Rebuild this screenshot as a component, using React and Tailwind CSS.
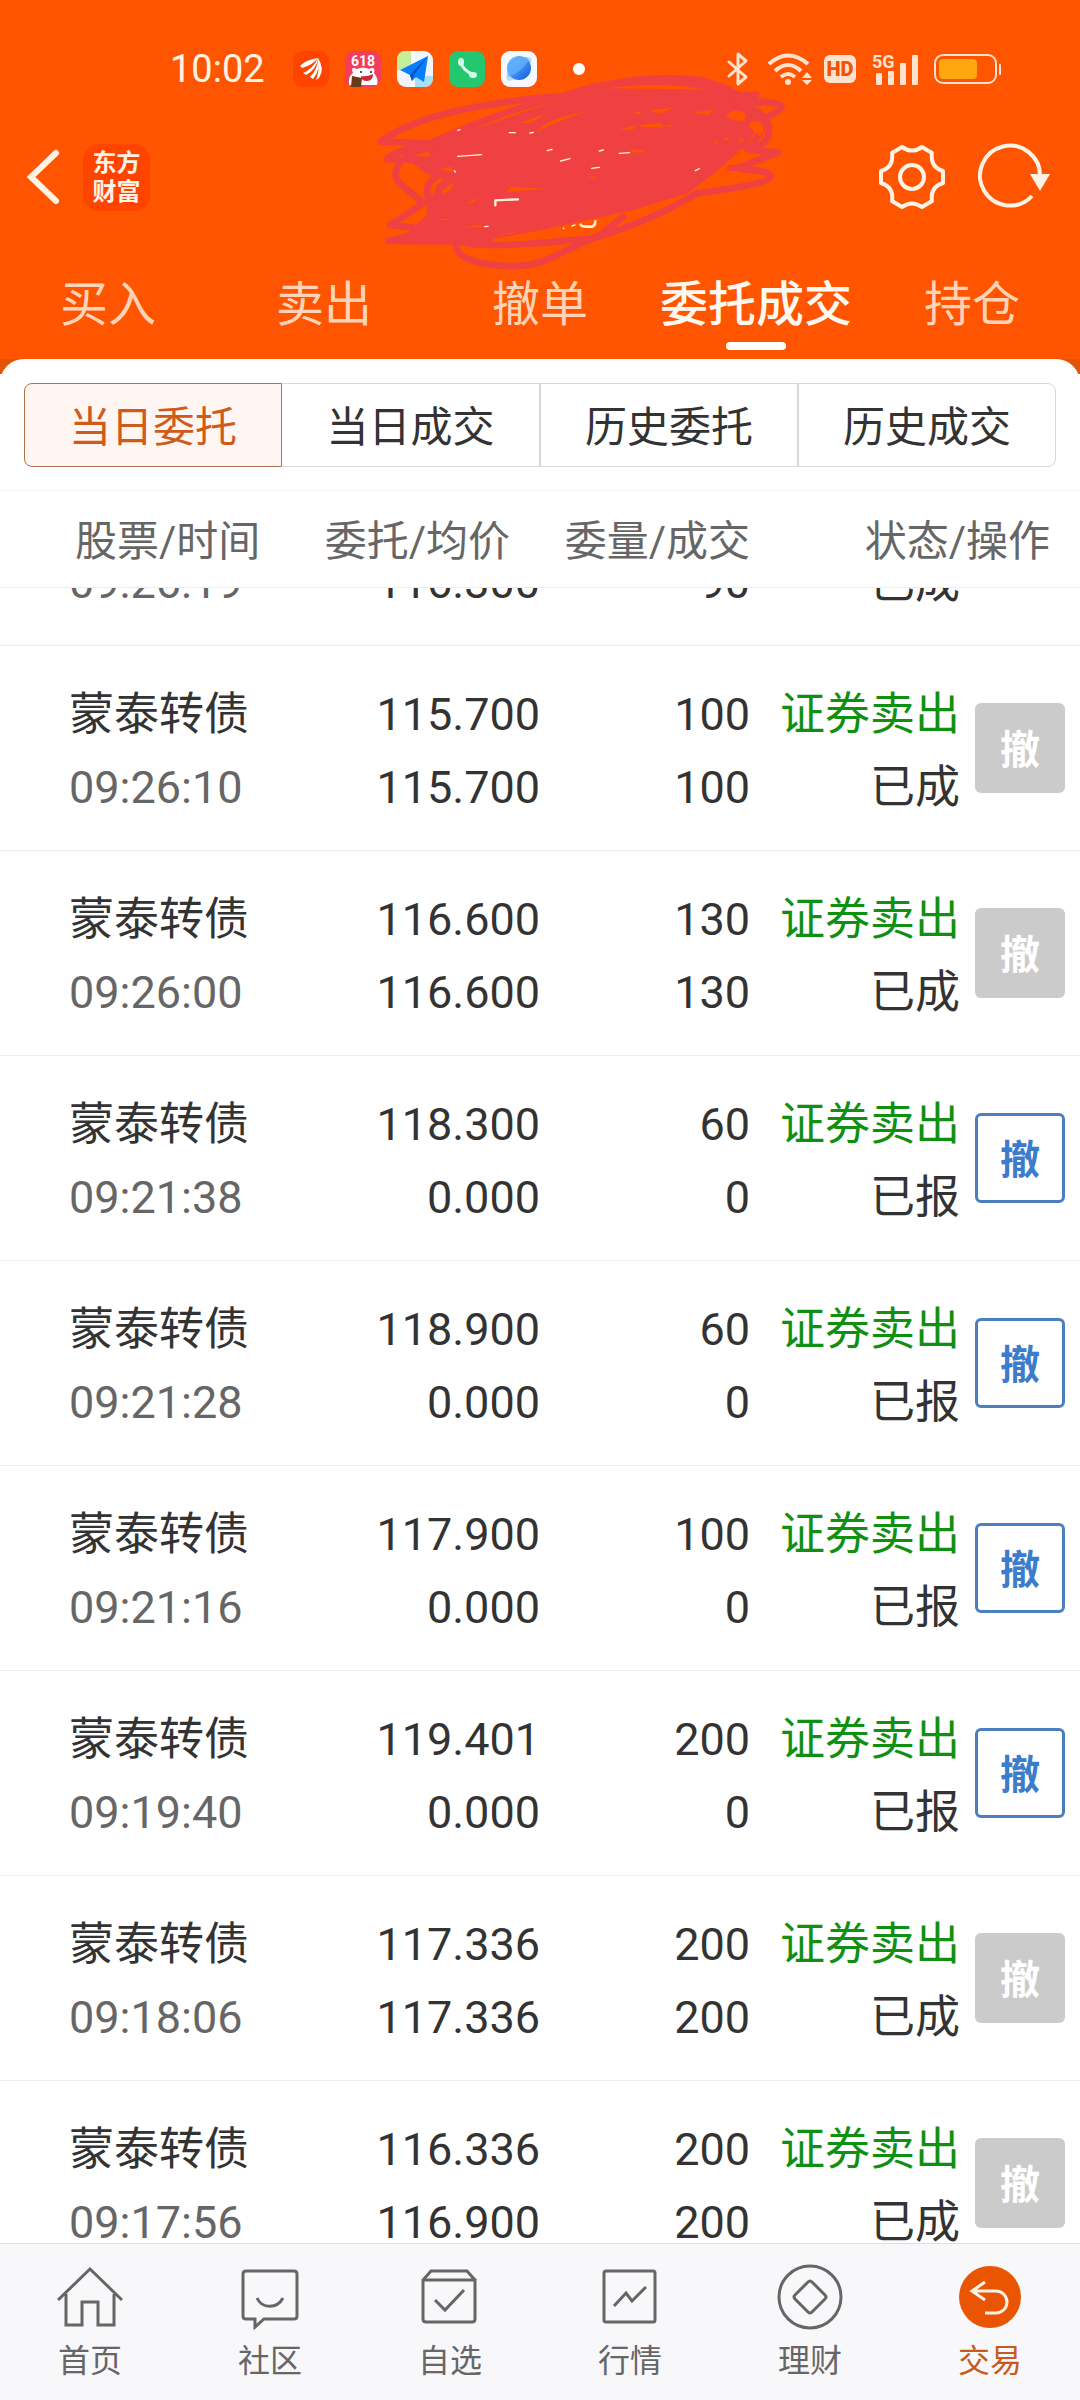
import React, { useLayoutEffect, useRef, useState } from 'react';

const topTabs = ['买入', '卖出', '撤单', '委托成交', '持仓'];
const segments = ['当日委托', '当日成交', '历史委托', '历史成交'];

const orders = [
  { time: '09:26:19', price: '116.300', avg: '116.300', qty: 90, done: 90, status: '已成' },
  { time: '09:26:10', price: '115.700', avg: '115.700', qty: 100, done: 100, status: '已成' },
  { time: '09:26:00', price: '116.600', avg: '116.600', qty: 130, done: 130, status: '已成' },
  { time: '09:21:38', price: '118.300', avg: '0.000', qty: 60, done: 0, status: '已报' },
  { time: '09:21:28', price: '118.900', avg: '0.000', qty: 60, done: 0, status: '已报' },
  { time: '09:21:16', price: '117.900', avg: '0.000', qty: 100, done: 0, status: '已报' },
  { time: '09:19:40', price: '119.401', avg: '0.000', qty: 200, done: 0, status: '已报' },
  { time: '09:18:06', price: '117.336', avg: '117.336', qty: 200, done: 200, status: '已成' },
  { time: '09:17:56', price: '116.336', avg: '116.900', qty: 200, done: 200, status: '已成' },
];

const navItems = [
  {
    label: '首页',
    icon: <path d="M4 39 36 8l32 31M12 33v31h16V41h16v23h16V33" />,
  },
  {
    label: '社区',
    icon: (
      <>
        <path d="M12 10h48q3 0 3 3v42q0 3-3 3H30l-9 8v-8h-9q-3 0-3-3V13q0-3 3-3Z" />
        <path d="M23 37c5 11 20 11 26 0" />
      </>
    ),
  },
  {
    label: '自选',
    icon: (
      <>
        <path d="M9 19h52v39q0 3-3 3H12q-3 0-3-3V19l8-9h36l8 9" />
        <path d="m21 39 10 10 19-20" />
      </>
    ),
  },
  {
    label: '行情',
    icon: (
      <>
        <rect x="10" y="10" width="51" height="51" rx="2" />
        <path d="m20 45 12-13 6 8 14-14" />
      </>
    ),
  },
  {
    label: '理财',
    icon: (
      <>
        <circle cx="36" cy="36" r="31" />
        <path d="m34 21q2-2 4 0l13 13q2 2 0 4L38 51q-2 2-4 0L21 38q-2-2 0-4Z" />
      </>
    ),
  },
  {
    label: '交易',
    active: true,
    icon: (
      <>
        <circle cx="36" cy="36" r="31" fill="#ea5504" stroke="none" />
        <path d="M31 21 18 30l13 9M18 30h24a11 11 0 0 1 0 22H31" stroke="#fff3e6" />
      </>
    ),
  },
];

function StatusBar() {
  return (
    <div className="flex h-[138px] items-center justify-between pl-[170px] pr-[78px]">
      <div className="flex items-center gap-4">
        <span className="w-[107px] text-[38px] leading-none text-[#fff3e6]">10:02</span>

        <svg className="size-9" viewBox="0 0 36 36">
          <rect width="36" height="36" rx="9" fill="#ff4400" />
          <path
            d="M7 15Q12 9 25 7Q20 14 9 17ZM10 22Q20 18 25 7Q24 18 13 24ZM17 26Q25 18 25 7Q28 18 20 28ZM23 29Q27 19 25 7Q32 18 26 27Z"
            fill="#fff"
          />
        </svg>

        <svg className="size-9" viewBox="0 0 36 36">
          <rect width="36" height="36" rx="9" fill="#f23d5c" />
          <path d="M4 34q-1-9 4-12-3-7 4-4 6-3 12 0 7-3 5 4 5 6 3 12Z" fill="#fff" />
          <text x="18" y="15" textAnchor="middle" fontSize="14" fontWeight="700" fill="#fff" fontFamily="Roboto">
            618
          </text>
          <circle cx="16" cy="21" r="1" fill="#222" />
          <circle cx="26" cy="21" r="1" fill="#222" />
          <path d="M16 25q6 1 12-2 0 7-6 7t-6-5Z" fill="#c92a3a" />
          <path d="M7 25l10 2-1 9H6Z" fill="#6b3a1a" />
        </svg>

        <svg className="size-9" viewBox="0 0 36 36">
          <rect width="36" height="36" rx="9" fill="#eef6fc" />
          <path d="M9 0h6v13L0 20V9q0-9 9-9Z" fill="#c4ef9a" />
          <path d="M18 25h18v2q0 9-9 9h-9Z" fill="#a5dff8" />
          <path d="M14 0h4v36h-4Z" fill="#fff" />
          <path d="M31 5 3 19l10 5 2 6 4-4 8 5Z" fill="#0a7dff" />
          <path d="M31 5 13 24l2 6 2-6Z" fill="#0754c9" />
        </svg>

        <svg className="size-9" viewBox="0 0 36 36">
          <rect width="36" height="36" rx="9" fill="#22c76f" />
          <path d="M12 11q1 8 13 13" fill="none" stroke="#d7fbe6" strokeWidth="3" />
          <ellipse cx="12" cy="11" rx="3" ry="4" fill="#d7fbe6" />
          <ellipse cx="24" cy="24" rx="4" ry="3" fill="#d7fbe6" />
        </svg>

        <svg className="size-9" viewBox="0 0 36 36">
          <defs>
            <linearGradient id="planet" x1="0" y1="0" x2="1" y2="1">
              <stop offset="0" stopColor="#7cc4ff" />
              <stop offset="1" stopColor="#0a5be0" />
            </linearGradient>
          </defs>
          <rect width="36" height="36" rx="9" fill="#f5f8fc" />
          <ellipse cx="18" cy="18" rx="16" ry="6" transform="rotate(-42 18 18)" fill="#b9dcfb" />
          <circle cx="18" cy="17" r="12" fill="url(#planet)" />
          <path d="M7 26Q20 22 28 9q-1-3-4-3Q9 8 6 21Z" fill="#62b3fc" opacity=".7" />
        </svg>

        <span className="ml-5 size-3 rounded-full bg-white" />
      </div>

      <div className="flex items-center text-[#ffe3cf]">
        <svg className="h-9 w-6" viewBox="0 0 24 36" fill="none" stroke="currentColor" strokeWidth="3" strokeLinejoin="round" strokeLinecap="round">
          <path d="M3 11 20 26l-8 7V3l8 7L3 25" />
        </svg>
        <svg className="ml-4 h-9 w-12" viewBox="0 0 48 36">
          <g fill="none" stroke="currentColor" strokeWidth="4">
            <path d="M3 13q19-17 39 0" />
            <path d="M9 20q13-12 26 0" />
            <path d="M15 26q7-6 14 0" />
          </g>
          <circle cx="22" cy="31" r="3" fill="currentColor" />
          <path d="m41 21 5 6H36ZM41 34l5-5H36Z" fill="currentColor" />
        </svg>
        <span className="ml-2.5 flex h-7 w-8 items-center justify-center rounded-md bg-[#ffe3cf] text-[20px] font-black leading-none text-[#f25400]">
          HD
        </span>
        <svg className="ml-4 h-9 w-12" viewBox="0 0 48 36" fill="currentColor">
          <text x="0" y="17" fontSize="18" fontWeight="700" fontFamily="Roboto">5G</text>
          <rect x="4" y="22" width="6" height="12" rx="1" />
          <rect x="16" y="20" width="6" height="14" rx="1" />
          <rect x="28" y="12" width="6" height="22" rx="1" />
          <rect x="40" y="4" width="6" height="30" rx="1" />
        </svg>
        <svg className="ml-3.5 h-9 w-[68px]" viewBox="0 0 68 36">
          <rect x="1" y="4" width="61" height="28" rx="8" fill="none" stroke="currentColor" strokeWidth="2" />
          <rect x="5" y="8" width="38" height="20" rx="4" fill="#ffa70f" />
          <rect x="65" y="13" width="2" height="11" rx="1" fill="currentColor" />
        </svg>
      </div>
    </div>
  );
}

// Garabato rojo que tapa el nombre de la cuenta
function AccountScribble() {
  return (
    <svg
      className="pointer-events-none absolute left-1/3 top-[70px] h-[210px] w-[440px]"
      viewBox="0 0 1320 630"
      fill="none"
      stroke="#ef4141"
      strokeWidth="20"
      strokeLinecap="round"
      strokeLinejoin="round"
    >
      <path
        d="M130 245 240 215 370 175 520 110 640 70 760 65 1100 70 1170 110 1190 160 1150 220 1060 300 980 360 820 410 520 475 300 515 200 500 140 505 210 440 210 390 290 330 200 300Z"
        fill="#ef4141"
      />
      <path d="M62 215Q150 150 330 115T620 80L860 90 1188 74" />
      <path d="M62 215 210 220Q400 130 620 75 820 10 1020 30 1080 45 1130 72" />
      <path d="M700 50Q900 20 1040 50L1200 100" />
      <path d="M1120 90Q1270 95 1265 110T1190 155" />
      <path d="M1130 100Q1215 120 1225 170T1170 240L1255 247 1130 295" />
      <path d="M1180 135Q1240 170 1160 235" />
      <path d="M1110 295Q1240 300 1230 322T1010 370" />
      <path d="M82 267Q130 225 230 235M82 267 180 270" />
      <path d="M120 275Q90 320 130 350T190 400L90 465 230 480 85 513 390 515" />
      <path d="M230 320Q190 340 205 390M280 330Q220 350 240 370" />
      <path d="M290 520Q280 570 400 585T600 550L720 495 790 440" />
      <path d="M310 515Q340 540 700 505 880 450 1010 370" />
      <g fill="#ff5500" stroke="none">
        <path d="M345 178Q440 130 605 90 500 120 345 178ZM530 185Q570 140 680 125 600 150 530 185ZM480 160 570 125 510 160ZM815 130 845 123 840 132ZM865 122 945 112 900 130ZM775 180 825 166 822 178ZM840 165 900 160 912 170 845 172ZM910 167 945 165 930 172ZM1000 127 1060 120 1045 135Z" />
        <path d="M1052 224 1075 210 1072 220ZM1088 208 1106 200 1100 212ZM1136 210 1155 205 1140 220ZM155 257 205 245 210 260ZM235 297 275 290 278 305ZM245 362 285 335 270 362 250 372ZM440 365 455 350 560 356ZM670 323 705 318 700 325ZM320 405 348 382 345 395ZM308 474 350 465 375 470ZM398 497 465 485 460 490ZM230 450 260 445 265 450ZM810 250 815 238 862 243ZM840 400 895 388 850 398ZM1050 345 1090 300 1150 305ZM1060 352 1145 325 1120 340Z" />
        <path d="M1098 140Q1115 115 1150 125 1165 140 1150 152 1130 155 1098 140ZM1168 170Q1170 140 1205 160 1218 180 1200 198Z" />
      </g>
      <g stroke="#fff1dc" strokeWidth="4">
        <path d="M293 259 365 254M448 188 466 188M510 189 520 187M562 242 576 238M602 273 630 266M718 243 730 240M778 250 808 248M695 295 718 292M1006 302 1018 296M283 302 286 306M293 181 300 179M374 470 384 469" />
        <path d="M406 406V391L474 388" strokeWidth="7" />
        <path d="M662 464Q664 470 680 470H696Q706 468 706 454" strokeWidth="8" />
        <path d="M610 474 612 476M636 468 645 465" />
      </g>
    </svg>
  );
}

function TitleBar() {
  return (
    <div className="flex h-[78px] items-center justify-between pl-6 pr-7">
      <div className="flex items-center gap-[23px]">
        <button type="button" aria-label="返回">
          <svg className="h-[60px] w-9" viewBox="0 0 36 60" fill="none" stroke="#fff3e6" strokeWidth="6" strokeLinecap="round" strokeLinejoin="miter">
            <path d="M32 6 7 30l25 24" />
          </svg>
        </button>
        <div className="flex size-[67px] flex-col items-center justify-center rounded-2xl bg-[#ff4400] pt-0.5 text-[24px] font-bold leading-[29px] text-[#fff3e6]">
          <span>东方</span>
          <span>财富</span>
        </div>
      </div>
      <div className="flex items-center gap-[30px]">
        <button type="button" aria-label="设置">
          <svg className="h-[68px] w-[72px]" viewBox="0 0 72 68" fill="none" stroke="#fff3e6" strokeWidth="4" strokeLinejoin="round">
            <path d="M26 4Q36 11 46 4L56 10Q54 24 67 28V40Q54 44 56 58L46 64Q36 57 26 64L16 58Q18 44 5 40V28Q18 24 16 10Z" />
            <circle cx="36" cy="34" r="12" />
          </svg>
        </button>
        <button type="button" aria-label="刷新">
          <svg className="h-[68px] w-[74px]" viewBox="0 0 74 68" fill="none" stroke="#fff3e6" strokeWidth="4">
            <path d="M54 53A30 30 0 1 1 62 34" />
            <path d="M52 31h20L62 48Z" fill="#fff3e6" stroke="none" />
          </svg>
        </button>
      </div>
    </div>
  );
}

function OrderRow({ order }) {
  const pending = order.status === '已报';
  return (
    <tr className="text-right text-[45px] leading-[73px] text-[#333]">
      <td className="border-b border-[#ececec] pb-[26px] pl-[69px] pt-8 text-left">
        <div>蒙泰转债</div>
        <div className="text-[#666]">{order.time}</div>
      </td>
      <td className="border-b border-[#ececec] pb-[26px] pt-8">
        <div>{order.price}</div>
        <div>{order.avg}</div>
      </td>
      <td className="border-b border-[#ececec] pb-[26px] pt-8">
        <div>{order.qty}</div>
        <div>{order.done}</div>
      </td>
      <td className="whitespace-nowrap border-b border-[#ececec] pb-[26px] pt-8">
        <div className="text-[#109010]">证券卖出</div>
        <div>{order.status}</div>
      </td>
      <td className="border-b border-[#ececec] pl-[15px] text-left align-middle">
        <button
          type="button"
          disabled={!pending}
          className={`block size-[90px] rounded-md pt-1.5 text-center text-[40px] font-bold leading-none ${
            pending ? 'border-3 border-[#4a80bd] bg-white text-[#3b7dcc]' : 'bg-[#cbcbcb] text-white'
          }`}
        >
          撤
        </button>
      </td>
    </tr>
  );
}

export default function App() {
  const [tab, setTab] = useState('委托成交');
  const [segment, setSegment] = useState('当日委托');
  const listRef = useRef(null);

  // La lista arranca un poco desplazada
  useLayoutEffect(() => {
    listRef.current.scrollTop = 147;
  }, []);

  return (
    <div lang="zh-CN" className="flex h-screen flex-col overflow-hidden bg-white font-[Roboto,'Noto_Sans_CJK_SC',sans-serif]">
      <header className="relative shrink-0 bg-[#ff5500]">
        <StatusBar />
        <TitleBar />
        <AccountScribble />

        <nav className="grid h-[143px] grid-cols-5 pt-[52px]">
          {topTabs.map((name) => (
            <button
              key={name}
              type="button"
              onClick={() => setTab(name)}
              className={`flex flex-col items-center whitespace-nowrap text-[48px] leading-[74px] ${
                tab === name ? 'font-medium text-[#fff8f0]' : 'text-[#ffd3b8]'
              }`}
            >
              {name}
              {tab === name && <span className="h-2 w-[60px] rounded-full bg-white" />}
            </button>
          ))}
        </nav>

        {/* Esquinas redondeadas del panel */}
        <div className="h-[15px] overflow-hidden bg-[#e25506]">
          <div className="h-12 rounded-t-3xl bg-white" />
        </div>
      </header>

      <div className="mx-6 mb-[23px] mt-[9px] grid h-[84px] shrink-0 grid-cols-4">
        {segments.map((name) => (
          <button
            key={name}
            type="button"
            onClick={() => setSegment(name)}
            className={`border pt-1.5 text-[42px] leading-none first:rounded-l-lg last:rounded-r-lg ${
              segment === name
                ? 'border-[#b0734f] bg-[#fff6f3] text-[#d05a1a]'
                : 'border-[#d6d8d9] bg-white text-[#333] nth-2:border-l-0'
            }`}
          >
            {name}
          </button>
        ))}
      </div>

      <main ref={listRef} className="min-h-0 flex-1 overflow-y-auto [scrollbar-width:none]">
        <table className="w-full table-fixed border-separate border-spacing-0">
          <colgroup>
            <col />
            <col className="w-[20%]" />
            <col className="w-[210px]" />
            <col className="w-[210px]" />
            <col className="w-[120px]" />
          </colgroup>
          <thead className="sticky top-0 z-10 bg-white">
            <tr className="h-[98px] whitespace-nowrap text-right text-[42px] leading-none text-[#666]">
              <th className="border-b border-t border-b-[#ececec] border-t-[#f5f5f5] pl-[75px] pt-1.5 text-left font-normal">股票/时间</th>
              <th className="border-b border-t border-b-[#ececec] border-t-[#f5f5f5] pr-[30px] pt-1.5 font-normal">委托/均价</th>
              <th className="border-b border-t border-b-[#ececec] border-t-[#f5f5f5] pt-1.5 font-normal">委量/成交</th>
              <th colSpan={2} className="border-b border-t border-b-[#ececec] border-t-[#f5f5f5] pr-[30px] pt-1.5 font-normal">状态/操作</th>
            </tr>
          </thead>
          <tbody>
            {orders.map((order) => (
              <OrderRow key={order.time} order={order} />
            ))}
          </tbody>
        </table>
      </main>

      <nav className="grid h-[157px] shrink-0 grid-cols-6 border-t border-[#dedede] bg-[#f8f8fa]">
        {navItems.map((item) => (
          <a
            key={item.label}
            href="#"
            className={`flex flex-col items-center pt-[17px] text-[32px] leading-[56px] ${
              item.active ? 'text-[#c95a1c]' : 'text-[#666]'
            }`}
          >
            <svg className="size-[72px]" viewBox="0 0 72 72" fill="none" stroke="currentColor" strokeWidth="3">
              {item.icon}
            </svg>
            {item.label}
          </a>
        ))}
      </nav>
    </div>
  );
}
